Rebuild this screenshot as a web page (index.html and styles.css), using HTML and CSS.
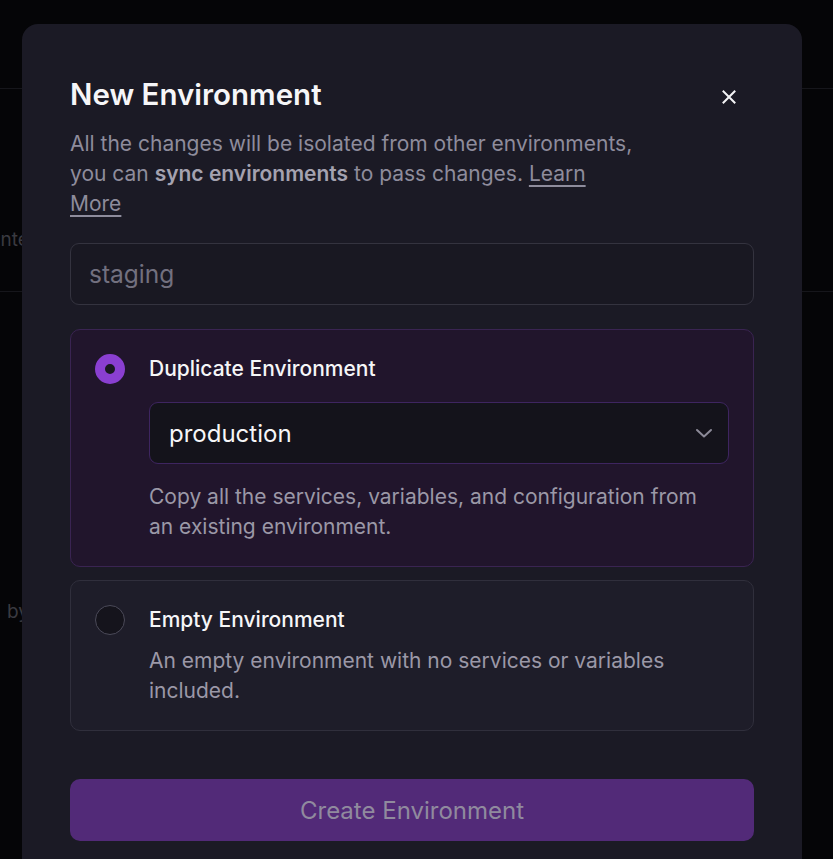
FILE: index.html
```html
<!DOCTYPE html>
<html lang="en">
<head>
<meta charset="utf-8">
<title>New Environment</title>
<link rel="stylesheet" href="styles.css">
</head>
<body>
<div class="page">
  <div class="topbar"></div>
  <div class="section">
    <p class="bg-text bg-text-cut">Maintenance window</p>
  </div>
  <div class="section-2">
    <p class="bg-text">by</p>
  </div>
</div>

<div class="modal" role="dialog" aria-labelledby="modal-title">
  <div class="modal-header">
    <h1 id="modal-title" class="modal-title">New Environment</h1>
    <button class="close-btn" aria-label="Close">
      <svg width="14" height="14" viewBox="0 0 14 14" fill="none" stroke="currentColor" stroke-width="2" stroke-linecap="square">
        <path d="M1.5 1.5 L12.5 12.5 M12.5 1.5 L1.5 12.5"/>
      </svg>
    </button>
  </div>
  <p class="modal-desc">All the changes will be isolated from other environments, you can <strong>sync environments</strong> to pass changes. <a href="#" class="learn">Learn More</a></p>

  <input class="name-input" type="text" placeholder="staging">

  <div class="options">
    <div class="option option-active">
      <span class="radio radio-on"></span>
      <div class="option-body">
        <div class="option-title">Duplicate Environment</div>
        <div class="select">
          <span class="select-value">production</span>
          <svg class="chevron" width="18" height="12" viewBox="0 0 18 12" fill="none" stroke="currentColor" stroke-width="2" stroke-linecap="round" stroke-linejoin="round">
            <path d="M2 3 L9 9.5 L16 3"/>
          </svg>
        </div>
        <p class="option-desc option-desc-spaced">Copy all the services, variables, and configuration from an existing environment.</p>
      </div>
    </div>
    <div class="option">
      <span class="radio"></span>
      <div class="option-body">
        <div class="option-title">Empty Environment</div>
        <p class="option-desc">An empty environment with no services or variables included.</p>
      </div>
    </div>
  </div>

  <button class="create-btn" disabled>Create Environment</button>
</div>
</body>
</html>
```

FILE: styles.css
```css
* { box-sizing: border-box; }

html, body {
  margin: 0;
  padding: 0;
  height: 100%;
  overflow: hidden;
}

body {
  background: #050507;
  font-family: Inter, "Noto Sans", sans-serif;
  color: #f3f3f5;
}

.page {
  display: flex;
  flex-direction: column;
}

.topbar {
  height: 89px;
  border-bottom: 1px solid #16161b;
}

.section {
  height: 203px;
  border-bottom: 1px solid #16161b;
  display: flex;
  align-items: center;
  padding-top: 100px;
}

.bg-text {
  margin: 0;
  font-size: 19px;
  line-height: 24px;
  color: #3a3a40;
  white-space: nowrap;
}

.bg-text-cut {
  text-indent: -32px;
}

.section-2 {
  padding: 308px 0 0 7px;
}

.modal {
  position: absolute;
  left: 22px;
  top: 24px;
  width: 780px;
  height: 880px;
  background: #1b1a25;
  border-radius: 16px;
  padding: 52px 48px 0 48px;
}

.modal-header {
  display: flex;
  justify-content: space-between;
  align-items: flex-start;
}

.modal-title {
  margin: 0;
  font-size: 29.5px;
  line-height: 36px;
  font-weight: 600;
  color: #f6f6f8;
  letter-spacing: 0;
}

.close-btn {
  background: none;
  border: 0;
  padding: 0;
  margin: 14px 18px 0 0;
  width: 14px;
  height: 14px;
  color: #f4f4f6;
  display: flex;
}

.modal-desc {
  margin: 17px 0 0 0;
  max-width: 568px;
  font-size: 21px;
  line-height: 30px;
  color: #8e8c9c;
}

.modal-desc strong {
  font-weight: 600;
  color: #a4a2b0;
}

.learn {
  color: #8e8c9c;
  text-decoration: underline;
  text-underline-offset: 4px;
}

.name-input {
  display: block;
  width: 100%;
  height: 62px;
  margin-top: 24px;
  border: 1px solid #34333f;
  border-radius: 9px;
  background: #191822;
  padding: 0 18px;
  font-family: inherit;
  font-size: 24.5px;
  color: #f3f3f5;
  outline: none;
}

.name-input::placeholder {
  color: #72707f;
}

.options {
  margin-top: 24px;
  display: flex;
  flex-direction: column;
  gap: 13px;
}

.option {
  display: grid;
  grid-template-columns: 30px 1fr;
  column-gap: 24px;
  padding: 24px;
  border: 1px solid #302f3c;
  border-radius: 10px;
  background: #1e1d29;
}

.option-active {
  background: #21152c;
  border-color: #3a2452;
}

.radio {
  width: 30px;
  height: 30px;
  border-radius: 50%;
  border: 1.5px solid #4b4a59;
  background: #15141c;
}

.radio-on {
  border: 10px solid #8a3fd1;
  background: #1a1822;
}

.option-title {
  font-size: 21px;
  line-height: 30px;
  font-weight: 500;
  color: #f6f6f8;
}

.select {
  margin-top: 18px;
  height: 62px;
  display: flex;
  align-items: center;
  justify-content: space-between;
  padding: 0 15px 0 19px;
  background: #14131b;
  border: 1px solid #3e2560;
  border-radius: 9px;
}

.select-value {
  font-size: 24px;
  color: #f6f6f8;
}

.chevron {
  color: #8c8a98;
}

.option-desc {
  margin: 11px 0 0 0;
  max-width: 568px;
  font-size: 21px;
  line-height: 30px;
  color: #9b98a7;
}

.option-desc-spaced {
  margin-top: 18px;
}

.create-btn {
  display: block;
  width: 100%;
  height: 62px;
  margin-top: 48px;
  border: 0;
  border-radius: 10px;
  background: #522a78;
  font-family: inherit;
  font-size: 24px;
  color: #908a9e;
}
```
